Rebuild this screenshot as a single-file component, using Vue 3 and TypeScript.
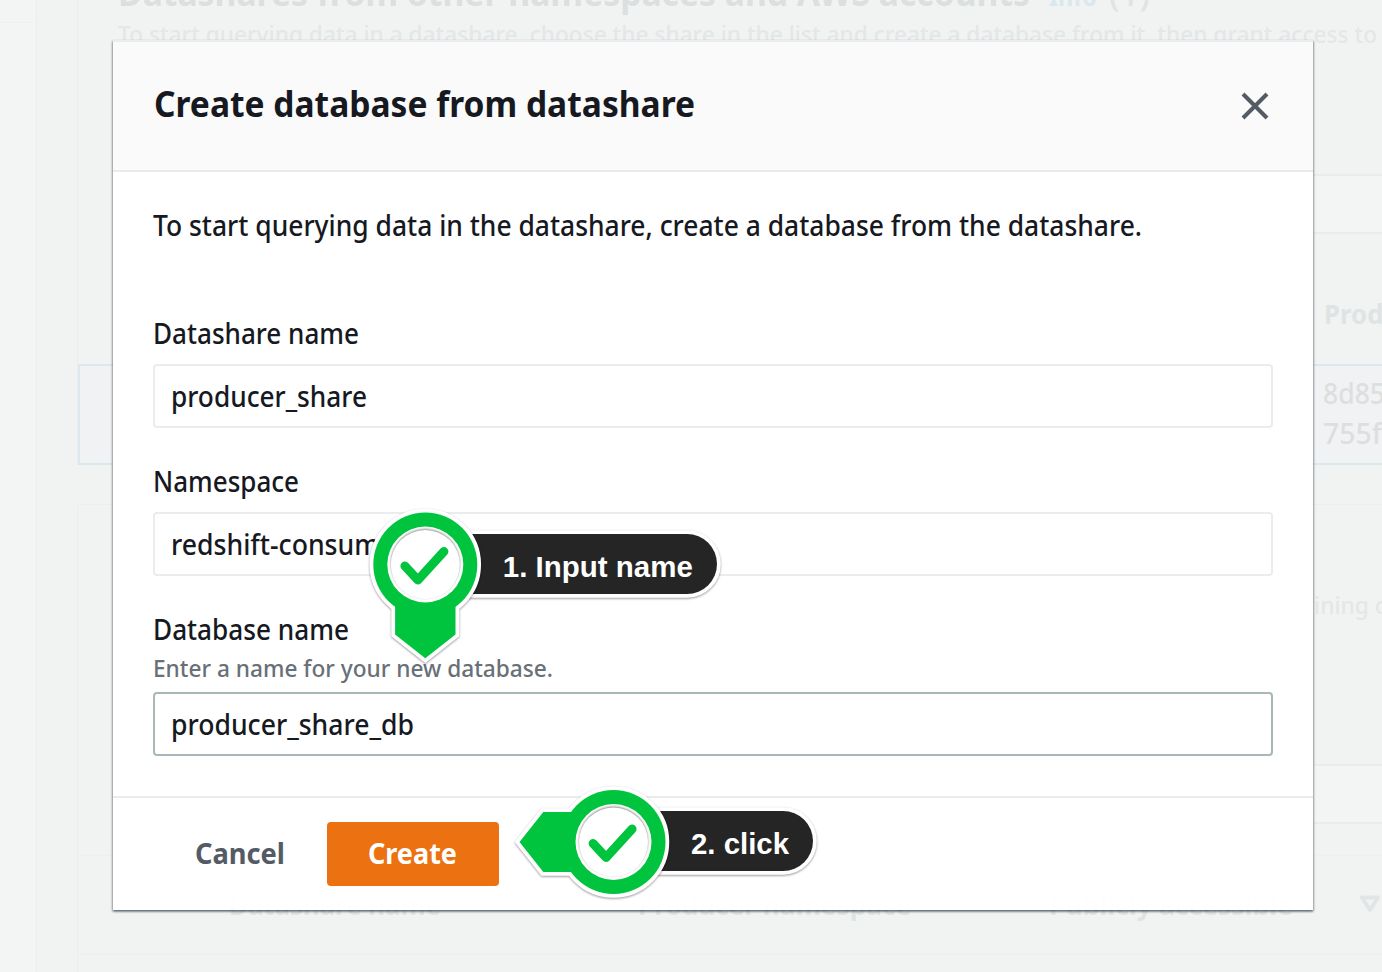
<script setup lang="ts">
import { h, ref } from 'vue'
import type { FunctionalComponent } from 'vue'

interface FitProps {
  text: string
  width: number
  size: number
  height: number
  baseline: number
  weight?: number
}

// One line of text fitted to a fixed measure.
const FitText: FunctionalComponent<FitProps> = (p) =>
  h('svg', { class: 'fit', width: p.width, height: p.height, style: { display: 'block', overflow: 'visible', flex: 'none' } }, [
    h('text', {
      x: 0,
      y: p.baseline,
      'font-size': p.size,
      'font-weight': p.weight ?? 500,
      fill: 'currentColor',
      textLength: p.width,
      lengthAdjust: 'spacingAndGlyphs',
    }, p.text),
  ])
FitText.props = ['text', 'width', 'size', 'height', 'baseline', 'weight']

interface Callout {
  id: string
  x: number
  y: number
  pointer: string
  labelEnd: number
  labelTop: number
  text: string
  textX: number
  textWidth: number
  textY: number
}

// Coordinates inside a callout are relative to the centre of its ring.
const callouts: Callout[] = [
  { id: 'name', x: 425.3, y: 564.5, pointer: 'M-30.2 30V70L0 93.8L30.2 70V30Z', labelEnd: 291.7, labelTop: -30.5, text: '1. Input name', textX: 77.5, textWidth: 190, textY: 12.5 },
  { id: 'click', x: 613.5, y: 842, pointer: 'M-30 -30H-70.2L-94 0L-70.2 30H-30Z', labelEnd: 199.5, labelTop: -31, text: '2. click', textX: 77.5, textWidth: 98, textY: 11.5 },
]

const databaseName = ref('producer_share_db')
</script>

<template>
  <div class="screen">
    <div class="backdrop">
      <div class="rail"></div>
      <main class="content">
        <section class="card first">
          <div class="card-head">
            <div class="card-title">
              <FitText text="Datashares from other namespaces and AWS accounts" :width="912" :size="36" :weight="700" :height="20" :baseline="6" />
              <FitText class="info" text="Info" :width="48" :size="27" :weight="700" :height="20" :baseline="6" />
              <FitText class="count" text="(1)" :width="41" :size="33" :height="20" :baseline="6" />
            </div>
            <FitText class="faint" text="To start querying data in a datashare, choose the share in the list and create a database from it, then grant access to" :width="1259" :size="24" :height="34" :baseline="23" />
          </div>
          <div class="toolbar"></div>
          <div class="table-head">
            <FitText text="Producer ID" :width="152" :size="27" :weight="700" :height="40" :baseline="30" />
          </div>
          <div class="selected">
            <FitText text="8d85" :width="62" :size="28" :height="40" :baseline="30" />
            <FitText text="755f" :width="59" :size="28" :height="40" :baseline="30" />
          </div>
        </section>
        <section class="card second">
          <div class="intro2"><FitText text="ining c" :width="72" :size="24" :height="34" :baseline="25" /></div>
          <div class="toolbar second-bar"></div>
          <div class="pager"></div>
          <div class="columns">
            <FitText text="Datashare name" :width="212" :size="27" :weight="700" :height="40" :baseline="30" />
            <FitText text="Producer namespace" :width="273" :size="27" :weight="700" :height="40" :baseline="30" />
            <FitText text="Publicly accessible" :width="244" :size="27" :weight="700" :height="40" :baseline="30" />
            <svg class="sort" width="20" height="18" viewBox="0 0 20 18"><path d="M2 2.5H18L10 15Z" /></svg>
          </div>
        </section>
      </main>
    </div>

    <div class="dialog" role="dialog">
      <header class="dialog-head">
        <FitText text="Create database from datashare" :width="541" :size="36" :weight="700" :height="44" :baseline="33" />
        <button class="close" aria-label="Close">
          <svg width="28" height="28" viewBox="0 0 28 28"><path d="M2 2L26 26M26 2L2 26" /></svg>
        </button>
      </header>
      <div class="dialog-body">
        <FitText text="To start querying data in the datashare, create a database from the datashare." :width="989" :size="28" :height="40" :baseline="30" />
        <div class="field lead">
          <FitText text="Datashare name" :width="206" :size="28" :height="40" :baseline="30" />
          <div class="box"><FitText text="producer_share" :width="196" :size="28" :height="40" :baseline="31" /></div>
        </div>
        <div class="field">
          <FitText text="Namespace" :width="146" :size="28" :height="40" :baseline="30" />
          <div class="box"><FitText text="redshift-consumer" :width="235" :size="28" :height="40" :baseline="31" /></div>
        </div>
        <div class="field">
          <FitText text="Database name" :width="196" :size="28" :height="40" :baseline="30" />
          <FitText class="hint" text="Enter a name for your new database." :width="400" :size="24" :height="34" :baseline="27" />
          <div class="box editable"><FitText :text="databaseName" :width="243" :size="28" :height="40" :baseline="31" /></div>
        </div>
      </div>
      <footer class="dialog-foot">
        <button class="btn"><FitText text="Cancel" :width="90" :size="28" :weight="700" :height="40" :baseline="30" /></button>
        <button class="btn primary"><FitText text="Create" :width="89" :size="28" :weight="700" :height="40" :baseline="30" /></button>
      </footer>
    </div>

    <svg class="callouts" width="1382" height="972" viewBox="0 0 1382 972">
      <g v-for="c in callouts" :key="c.id" :transform="`translate(${c.x} ${c.y})`">
        <g class="lift">
          <rect class="pill" x="0" :y="c.labelTop" :width="c.labelEnd" height="60" rx="30" />
        </g>
        <g class="lift">
          <g class="outline"><circle r="52" /><path :d="c.pointer" /></g>
          <g class="green"><circle r="52" /><path :d="c.pointer" /></g>
        </g>
        <circle r="38" fill="#fff" />
        <circle class="disc" r="34.5" />
        <path class="tick" d="M-20.4 1.5L-7.4 15.5L18.6 -13" />
        <text class="label" :x="c.textX" :y="c.textY" :textLength="c.textWidth" lengthAdjust="spacingAndGlyphs">{{ c.text }}</text>
      </g>
    </svg>
  </div>
</template>

<style>
body {
  margin: 0;
  overflow: hidden;
}
</style>

<style scoped>
.screen {
  position: relative;
  width: 1382px;
  height: 972px;
  overflow: hidden;
  background: #f1f3f3;
  color: #16191f;
  font-family: "Noto Sans", "Open Sans", sans-serif;
}
.screen * {
  box-sizing: border-box;
}
.backdrop {
  display: flex;
  height: 972px;
  color: #e0e3e4;
}
.rail {
  flex: none;
  width: 37px;
  padding-top: 22px;
  background: #f3f5f4;
  border-right: 1px solid #ebeeed;
}
.rail::before {
  content: "";
  display: block;
  border-top: 1px solid #eff1f1;
}
.content {
  flex: none;
  width: 1400px;
  margin-left: 40px;
}
.card {
  border-left: 1px solid #eceeee;
}
.first {
  height: 465px;
}
.card-head {
  height: 174px;
  padding-left: 40px;
}
.card-title {
  display: flex;
  height: 20px;
  color: #dcdfdf;
}
.info {
  margin-left: 19px;
  color: #d9e7ee;
}
.count {
  margin-left: 12px;
  color: #e0e3e4;
}
.faint {
  color: #e4e6e7;
}
.toolbar {
  height: 60px;
  margin-left: 40px;
  background: #f3f5f4;
  border-top: 2px solid #eaecec;
  border-bottom: 2px solid #eaecec;
}
.table-head {
  height: 130px;
  padding: 60px 0 0 1246px;
}
.selected {
  height: 101px;
  padding: 8px 0 0 1243px;
  background: #f1f2f4;
  border: 2px solid #dce8ee;
  color: #dddfdf;
}
.second {
  height: 469px;
  margin-top: 39px;
  border-top: 1px solid #eceeee;
}
.intro2 {
  height: 259px;
  padding: 84px 0 0 1236px;
  color: #e4e6e7;
}
.second-bar {
  height: 60px;
}
.pager {
  height: 32px;
  border-bottom: 1px solid #eef0f0;
}
.columns {
  display: flex;
  height: 99px;
  padding: 29px 0 0 151px;
  border-bottom: 1px solid #eceeee;
}
.columns > :nth-child(2) {
  margin-left: 197px;
}
.columns > :nth-child(3) {
  margin-left: 138px;
}
.sort {
  margin: 10px 0 0 67px;
  fill: none;
  stroke: #e2e5e5;
  stroke-width: 4;
  stroke-linejoin: round;
}
.dialog {
  position: absolute;
  left: 113px;
  top: 40px;
  width: 1200px;
  height: 870px;
  border-top: 2px solid #eaeded;
  background: rgba(255, 255, 255, 0.97);
  box-shadow: 0 2px 2px rgba(0, 28, 36, 0.3), 1px 1px 2px rgba(0, 28, 36, 0.3), -1px 1px 2px rgba(0, 28, 36, 0.3);
}
.dialog-head {
  display: flex;
  align-items: center;
  justify-content: space-between;
  height: 130px;
  padding: 0 44px 0 40.5px;
  background: #fafafa;
  border-bottom: 2px solid #eaebeb;
}
.close {
  width: 28px;
  height: 28px;
  padding: 0;
  border: 0;
  background: none;
}
.close svg {
  display: block;
  fill: none;
  stroke: #545b64;
  stroke-width: 4;
}
.dialog-body {
  height: 624px;
  padding: 34px 40px 0;
}
.field {
  margin-top: 34px;
}
.field.lead {
  margin-top: 68px;
}
.hint {
  color: #687078;
}
.box {
  display: flex;
  align-items: center;
  height: 64px;
  margin-top: 10px;
  padding: 0 16px;
  border: 2px solid #eaeded;
  border-radius: 4px;
  background: #fff;
}
.box.editable {
  margin-top: 8px;
  border-color: #aab7b8;
}
.dialog-foot {
  display: flex;
  height: 114px;
  padding: 24px 40px 0;
  border-top: 2px solid #eaebeb;
}
.btn {
  display: flex;
  align-items: center;
  height: 64px;
  padding: 0 42px;
  border: 0;
  border-radius: 4px;
  background: none;
  color: #545b64;
  font-family: inherit;
}
.btn.primary {
  width: 172px;
  padding: 0 41px;
  background: #ec7211;
  color: #fff;
}
.callouts {
  position: absolute;
  left: 0;
  top: 0;
  pointer-events: none;
}
.lift {
  filter: drop-shadow(0 1.5px 1px rgba(0, 0, 0, 0.4));
}
.pill {
  fill: #252525;
  stroke: #fff;
  stroke-width: 7.5;
  paint-order: stroke;
}
.outline {
  fill: #fff;
  stroke: #fff;
  stroke-width: 7.5;
}
.green {
  fill: #00c43e;
}
.disc {
  fill: #fff;
  filter: drop-shadow(0 -1px 1px rgba(0, 0, 0, 0.45));
}
.tick {
  fill: none;
  stroke: #00c43e;
  stroke-width: 9;
  stroke-linecap: round;
  stroke-linejoin: round;
}
.label {
  fill: #fff;
  font: 700 30px "Liberation Sans", Arial, sans-serif;
}
</style>
